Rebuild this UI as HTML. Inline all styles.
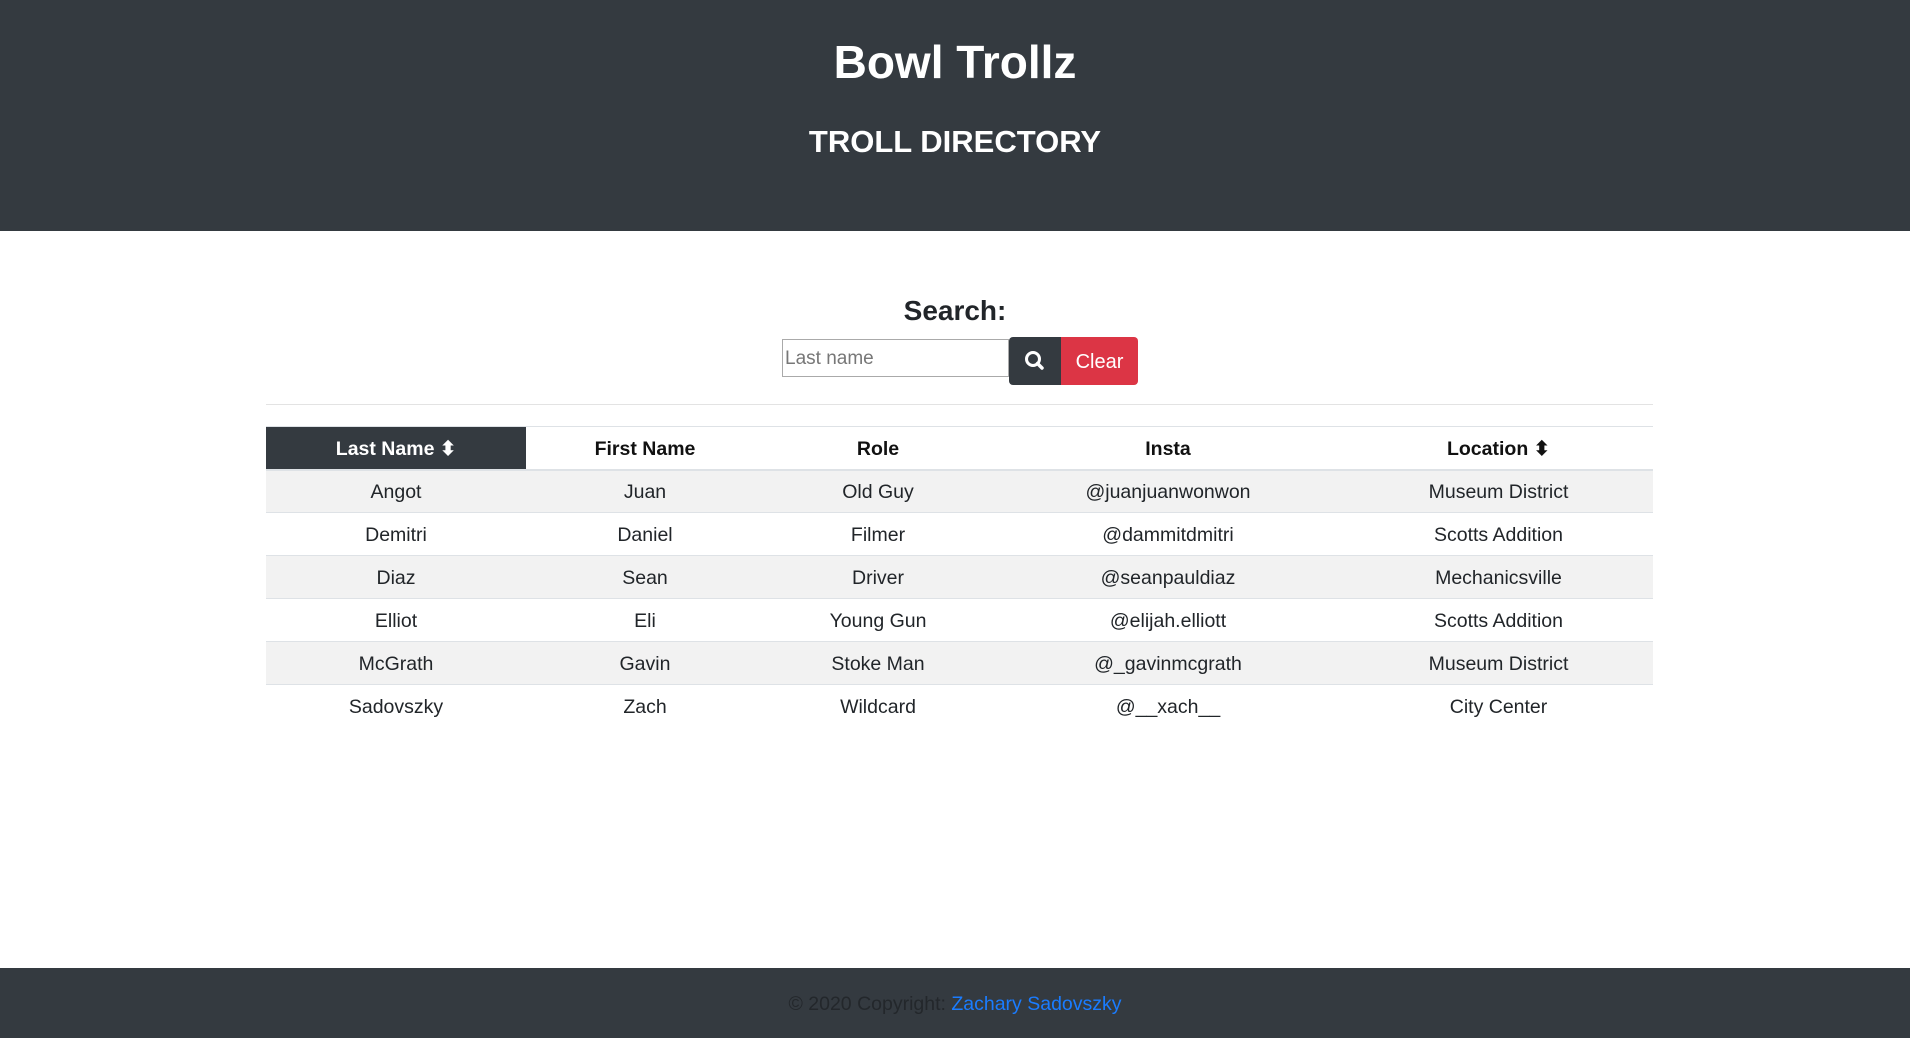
<!DOCTYPE html>
<html><head><meta charset="utf-8"><style>
*{box-sizing:border-box;margin:0;padding:0}
body{width:1910px;height:1045px;background:#fff;font-family:"Liberation Sans",sans-serif;color:#212529;position:relative;overflow:hidden}
.hdr{position:absolute;left:0;top:0;width:1910px;height:231px;background:#343a40;color:#fff;text-align:center}
.t1{position:absolute;left:0;right:0;top:32px;font-size:46px;font-weight:bold;line-height:60px}
.t2{position:absolute;left:0;right:0;top:122px;font-size:31px;line-height:40px;font-weight:bold}
.sl{position:absolute;left:0;right:0;top:293px;text-align:center;font-size:28px;font-weight:bold;line-height:36px}
.inp{position:absolute;left:782px;top:339px;width:227px;height:38px;border:1px solid #aaa;font-size:19px;color:#777;padding:8px 2px;line-height:22px}
.sb{position:absolute;left:1009px;top:337px;width:52px;height:48px;background:#343a40;border-radius:4px 0 0 4px}
.cb{position:absolute;left:1061px;top:337px;width:77px;height:48px;background:#dc3545;border-radius:0 4px 4px 0;color:#fff;font-size:20px;text-align:center;line-height:50px}
.hr{position:absolute;left:266px;top:404px;width:1387px;height:1px;background:#e3e3e3}
table{position:absolute;left:266px;top:426px;width:1387px;border-collapse:collapse;font-size:19.5px;text-align:center}
th,td{height:43px;padding:3px 0 0 0;border-top:1px solid #dee2e6}
th{border-bottom:2px solid #dee2e6;font-weight:bold;color:#111}
th.d{background:#343a40;color:#fff}
tbody tr:nth-child(odd){background:#f2f2f2}
.ft{position:absolute;left:0;top:968px;width:1910px;height:70px;background:#343a40;text-align:center;font-size:19.5px;line-height:72px;color:#23272b}
.ft span{color:#1a7cff}
</style></head><body>
<div class="hdr"><div class="t1">Bowl Trollz</div><div class="t2">TROLL DIRECTORY</div></div>
<div class="sl">Search:</div>
<div class="inp">Last name</div>
<div class="sb"><svg width="52" height="48" viewBox="0 0 52 48"><circle cx="24" cy="22" r="6.5" fill="none" stroke="#fff" stroke-width="3"/><line x1="28.5" y1="26.5" x2="33" y2="31" stroke="#fff" stroke-width="3.5" stroke-linecap="round"/></svg></div>
<div class="cb">Clear</div>
<div class="hr"></div>
<table>
<colgroup><col style="width:260px"><col style="width:238px"><col style="width:228px"><col style="width:352px"><col style="width:309px"></colgroup>
<thead><tr><th class="d">Last Name ⬍</th><th>First Name</th><th>Role</th><th>Insta</th><th>Location ⬍</th></tr></thead>
<tbody>
<tr><td>Angot</td><td>Juan</td><td>Old Guy</td><td>@juanjuanwonwon</td><td>Museum District</td></tr>
<tr><td>Demitri</td><td>Daniel</td><td>Filmer</td><td>@dammitdmitri</td><td>Scotts Addition</td></tr>
<tr><td>Diaz</td><td>Sean</td><td>Driver</td><td>@seanpauldiaz</td><td>Mechanicsville</td></tr>
<tr><td>Elliot</td><td>Eli</td><td>Young Gun</td><td>@elijah.elliott</td><td>Scotts Addition</td></tr>
<tr><td>McGrath</td><td>Gavin</td><td>Stoke Man</td><td>@_gavinmcgrath</td><td>Museum District</td></tr>
<tr><td>Sadovszky</td><td>Zach</td><td>Wildcard</td><td>@__xach__</td><td>City Center</td></tr>
</tbody></table>
<div class="ft">© 2020 Copyright: <span>Zachary Sadovszky</span></div>
</body></html>
